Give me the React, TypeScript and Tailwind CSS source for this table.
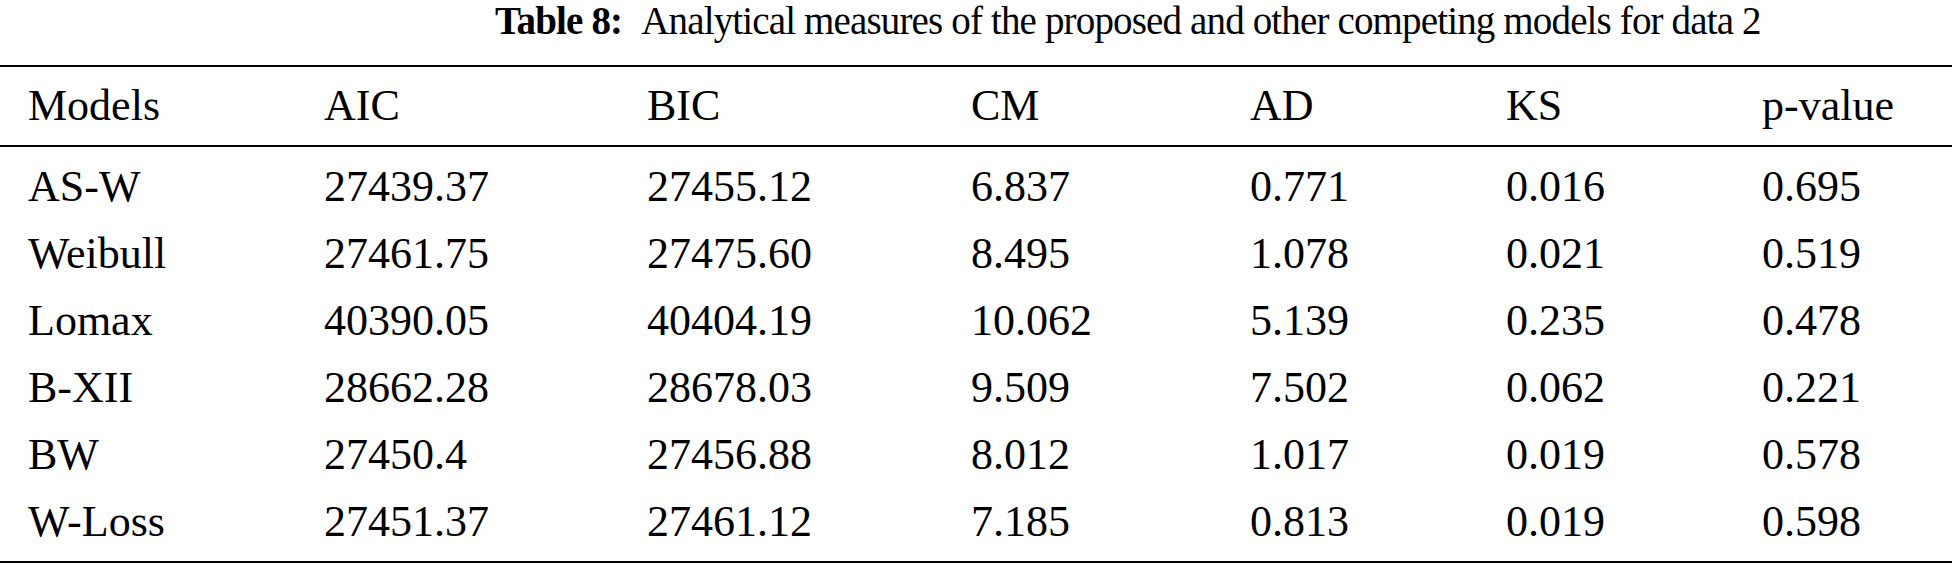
const headers = ['Models', 'AIC', 'BIC', 'CM', 'AD', 'KS', 'p-value'];

const rows = [
  ['AS-W', '27439.37', '27455.12', '6.837', '0.771', '0.016', '0.695'],
  ['Weibull', '27461.75', '27475.60', '8.495', '1.078', '0.021', '0.519'],
  ['Lomax', '40390.05', '40404.19', '10.062', '5.139', '0.235', '0.478'],
  ['B-XII', '28662.28', '28678.03', '9.509', '7.502', '0.062', '0.221'],
  ['BW', '27450.4', '27456.88', '8.012', '1.017', '0.019', '0.578'],
  ['W-Loss', '27451.37', '27461.12', '7.185', '0.813', '0.019', '0.598'],
];

// column widths measured off the page
const cols = 'grid grid-cols-[296px_323px_324px_279px_256px_256px_1fr] pl-[28px]';

export default function App() {
  return (
    <div className="w-[1952px] h-[565px] bg-white text-black font-['Liberation_Serif','Times_New_Roman',serif] overflow-hidden">
      {/* caption */}
      <div className="pl-[495px] text-[39px] leading-[42px] tracking-[-0.85px] whitespace-nowrap">
        <span className="font-bold">Table 8:</span>
        <span className="ml-[19px]">Analytical measures of the proposed and other competing models for data 2</span>
      </div>

      <div className="mt-[23px] border-t-2 border-b-2 border-black">
        <div className={`${cols} h-[80px] items-center text-[44px] border-b-2 border-black`}>
          {headers.map((h) => (
            <div key={h}>{h}</div>
          ))}
        </div>
        <div className="pt-[6px] pb-[6px]">
          {rows.map((r) => (
            <div key={r[0]} className={`${cols} h-[67px] items-center text-[44px] leading-[67px]`}>
              {r.map((c, i) => (
                <div key={i}>{c}</div>
              ))}
            </div>
          ))}
        </div>
      </div>
    </div>
  );
}
